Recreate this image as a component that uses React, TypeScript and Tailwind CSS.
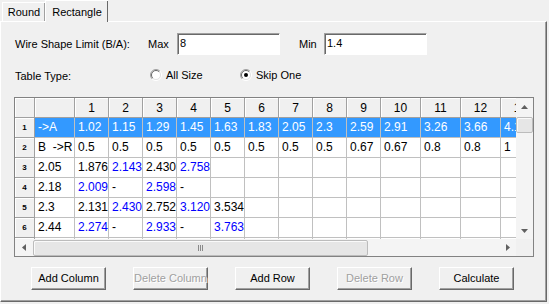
import type { FC, ReactNode } from 'react';

type Cell = { v: string; blue?: boolean };

const COL_WIDTHS = [40, 34, 34, 34, 34, 34, 34, 34, 34, 34, 40, 40, 40, 40];
const HEADERS = ['', '1', '2', '3', '4', '5', '6', '7', '8', '9', '10', '11', '12', '13'];

const b = (v: string): Cell => ({ v, blue: true });
const k = (v: string): Cell => ({ v });

const ROWS: Cell[][] = [
  ['->A', '1.02', '1.15', '1.29', '1.45', '1.63', '1.83', '2.05', '2.3', '2.59', '2.91', '3.26', '3.66', '4.1'].map(k),
  ['B  ->R', '0.5', '0.5', '0.5', '0.5', '0.5', '0.5', '0.5', '0.5', '0.67', '0.67', '0.8', '0.8', '1'].map(k),
  [k('2.05'), k('1.876'), b('2.143'), k('2.430'), b('2.758')],
  [k('2.18'), b('2.009'), k('-'), b('2.598'), k('-')],
  [k('2.3'), k('2.131'), b('2.430'), k('2.752'), b('3.120'), k('3.534')],
  [k('2.44'), b('2.274'), k('-'), b('2.933'), k('-'), b('3.763')],
  [],
];

const raised = 'border-r border-b border-[#a0a0a0] bg-[#f0f0f0] shadow-[inset_1px_1px_#ffffff]';

const Radio: FC<{ checked?: boolean }> = ({ checked }) => (
  <svg width="12" height="12" viewBox="0 0 12 12" className="shrink-0">
    <circle cx="6" cy="6" r="4.5" fill="#fff" />
    <path d="M2.1 9.9 A5.5 5.5 0 0 1 9.9 2.1" fill="none" stroke="#a0a0a0" />
    <path d="M9.9 2.1 A5.5 5.5 0 0 1 2.1 9.9" fill="none" stroke="#ffffff" />
    <path d="M2.8 9.2 A4.5 4.5 0 0 1 9.2 2.8" fill="none" stroke="#696969" />
    <path d="M9.2 2.8 A4.5 4.5 0 0 1 2.8 9.2" fill="none" stroke="#e3e3e3" />
    {checked && <circle cx="6" cy="6" r="2" fill="#000" />}
  </svg>
);

const Arrow: FC<{ dir: 'up' | 'down' | 'left' | 'right' }> = ({ dir }) => {
  const d = {
    up: 'M0 4 L3.5 0 L7 4 Z',
    down: 'M0 0 L7 0 L3.5 4 Z',
    left: 'M4 0 L4 7 L0 3.5 Z',
    right: 'M0 0 L4 3.5 L0 7 Z',
  }[dir];
  const vertical = dir === 'up' || dir === 'down';
  return (
    <svg width={vertical ? 7 : 4} height={vertical ? 4 : 7} viewBox={vertical ? '0 0 7 4' : '0 0 4 7'}>
      <path d={d} fill="#606060" />
    </svg>
  );
};

const WinButton: FC<{ children: ReactNode; disabled?: boolean }> = ({ children, disabled }) => (
  <div
    className={`flex h-[23px] w-[75px] items-center justify-center border border-t-white border-l-white border-r-[#696969] border-b-[#696969] bg-[#f0f0f0] text-[11px] shadow-[inset_-1px_-1px_#a0a0a0] ${
      disabled ? 'text-[#a0a0a0] [text-shadow:1px_1px_#ffffff]' : 'text-black'
    }`}
  >
    {children}
  </div>
);

const Field: FC<{ value: string }> = ({ value }) => (
  <div className="h-[22px] w-[103px] border border-t-[#a0a0a0] border-l-[#a0a0a0] border-r-white border-b-white bg-white pl-[2px] pt-[2px] text-[11px] leading-[14px] shadow-[inset_1px_1px_#696969]">
    {value}
  </div>
);

export default function App() {
  return (
    <div className="h-[304px] w-[549px] overflow-hidden bg-[#f0f0f0] font-['Liberation_Sans',Arial,sans-serif] text-black">
      {/* tab strip */}
      <div className="flex h-[21px] items-end pl-[2px]">
        <div className="flex h-[19px] w-[43px] items-center justify-center border-t border-l border-white text-[11px] shadow-[inset_-1px_0_#a0a0a0]">
          Round
        </div>
        <div className="relative z-10 -mb-px flex h-[22px] w-[63px] items-start justify-center border-t border-l border-white bg-[#f0f0f0] pt-[3px] text-[11px] shadow-[inset_-1px_0_#696969]">
          Rectangle
        </div>
      </div>

      {/* tab panel */}
      <div className="flex h-[281px] w-[547px] flex-col border border-t-white border-l-white border-r-[#696969] border-b-[#696969] shadow-[inset_-1px_-1px_#a0a0a0]">
        <div className="mt-[11px] flex h-[22px] items-center pl-[14px] text-[11px]">
          <span className="w-[133px]">Wire Shape Limit (B/A):</span>
          <span className="w-[29px]">Max</span>
          <Field value="8" />
          <span className="ml-[19px] w-[25px]">Min</span>
          <Field value="1.4" />
        </div>

        <div className="mt-[12px] flex h-[16px] items-center pl-[14px] text-[11px]">
          <span className="w-[135px] pt-[3px]">Table Type:</span>
          <Radio />
          <span className="ml-[4px] w-[74px]">All Size</span>
          <Radio checked />
          <span className="ml-[4px]">Skip One</span>
        </div>

        {/* grid */}
        <div className="ml-[13px] mt-[14px] flex h-[160px] w-[520px] flex-col border border-[#828282]">
          <div className="flex h-[141px]">
            <div className="w-[501px] overflow-hidden text-[12px]">
              <div className="flex h-[20px]">
                <div className={`w-[20px] shrink-0 ${raised}`} />
                {HEADERS.map((h, i) => (
                  <div
                    key={i}
                    style={{ width: COL_WIDTHS[i] }}
                    className={`flex shrink-0 items-center justify-center ${raised}`}
                  >
                    {h}
                  </div>
                ))}
              </div>
              {ROWS.map((row, r) => (
                <div key={r} className="flex h-[20px]">
                  <div className={`flex w-[20px] shrink-0 items-center justify-center text-[8px] font-bold ${raised}`}>
                    {r < 6 ? r + 1 : ''}
                  </div>
                  {COL_WIDTHS.map((w, c) => {
                    const cell = row[c];
                    const hl = r === 0;
                    return (
                      <div
                        key={c}
                        style={{ width: w }}
                        className={`shrink-0 overflow-hidden whitespace-pre border-r border-b border-[#c0c0c0] pl-[3px] leading-[19px] ${
                          hl ? 'bg-[#3399ff] text-white' : cell?.blue ? 'bg-white text-[#0000ff]' : 'bg-white text-black'
                        }`}
                      >
                        {cell?.v ?? ''}
                      </div>
                    );
                  })}
                </div>
              ))}
            </div>

            {/* vertical scrollbar */}
            <div className="flex w-[17px] flex-col bg-[#f4f4f4]">
              <div className="flex h-[17px] items-center justify-center">
                <Arrow dir="up" />
              </div>
              <div className="mt-[2px] h-[16px] rounded-[2px] border border-[#bcbcbc] bg-[#e6e6e6] shadow-[inset_1px_1px_#fafafa]" />
              <div className="flex-1" />
              <div className="flex h-[17px] items-center justify-center">
                <Arrow dir="down" />
              </div>
            </div>
          </div>

          {/* horizontal scrollbar */}
          <div className="flex h-[17px]">
            <div className="flex w-[501px] items-center bg-[#f4f4f4]">
              <div className="flex h-[17px] w-[17px] items-center justify-center">
                <Arrow dir="left" />
              </div>
              <div className="ml-px flex h-[16px] w-[335px] items-center justify-center rounded-[2px] border border-[#bcbcbc] bg-[#e6e6e6] shadow-[inset_1px_1px_#fafafa]">
                <div className="flex gap-[1px]">
                  <div className="h-[6px] w-px bg-[#8a8a8a]" />
                  <div className="h-[6px] w-px bg-[#8a8a8a]" />
                  <div className="h-[6px] w-px bg-[#8a8a8a]" />
                </div>
              </div>
              <div className="flex-1" />
              <div className="flex h-[17px] w-[17px] items-center justify-center">
                <Arrow dir="right" />
              </div>
            </div>
            <div className="w-[17px] bg-[#f0f0f0]" />
          </div>
        </div>

        <div className="mt-[10px] flex gap-[27px] pl-[30px]">
          <WinButton>Add Column</WinButton>
          <WinButton disabled>Delete Column</WinButton>
          <WinButton>Add Row</WinButton>
          <WinButton disabled>Delete Row</WinButton>
          <WinButton>Calculate</WinButton>
        </div>
      </div>
    </div>
  );
}
